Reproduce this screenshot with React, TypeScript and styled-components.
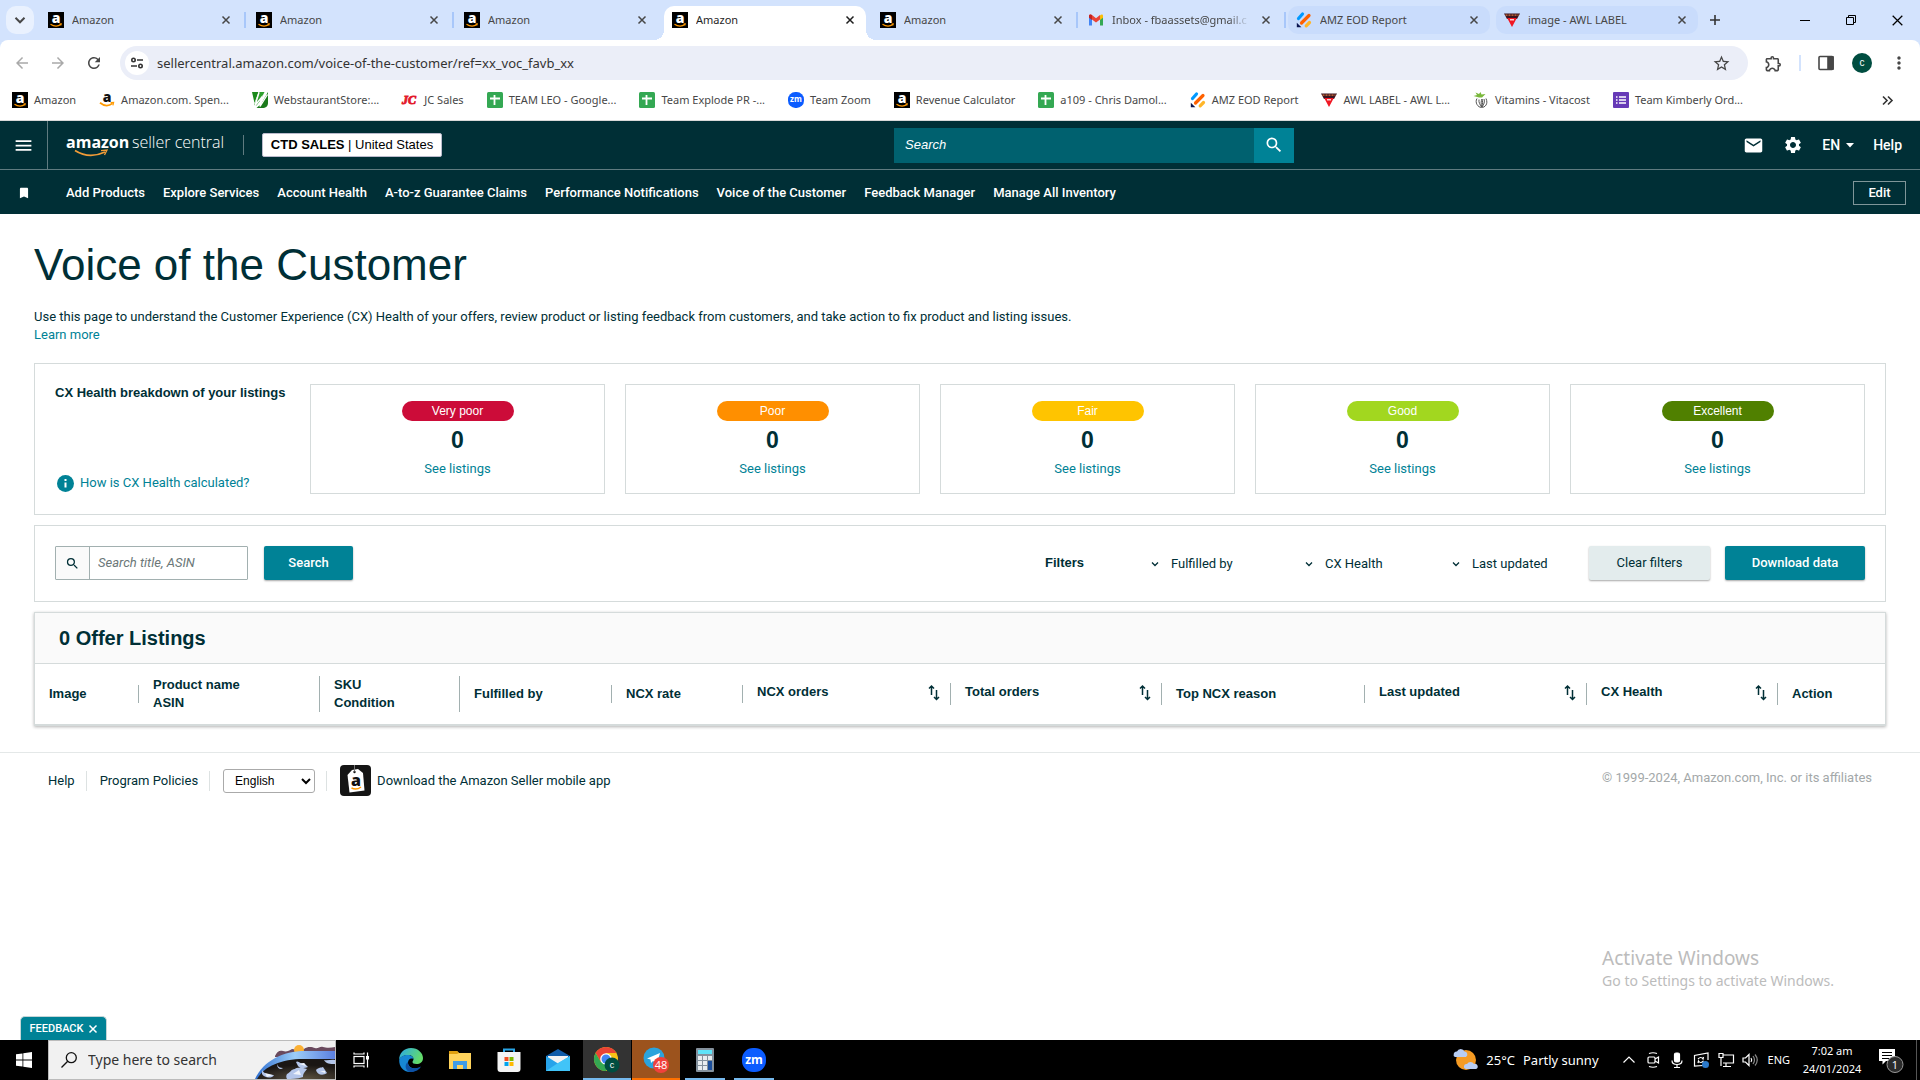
import React from 'react';
import styled, { createGlobalStyle, css } from 'styled-components';
import {
  MdArrowBack,
  MdArrowForward,
  MdBookmark,
  MdMail,
  MdMenu,
  MdMoreVert,
  MdOutlineExtension,
  MdRefresh,
  MdSearch,
  MdSettings,
  MdStarBorder,
} from 'react-icons/md';

const ARIAL = '"Liberation Sans", Arial, sans-serif';
const EMBER = 'Roboto, "Liberation Sans", sans-serif';
const SEGOE = '"Noto Sans", "Open Sans", sans-serif';

const TEAL = '#008296';
const INK = '#002f36';
const LINE = '#d5dbdb';

const GlobalStyle = createGlobalStyle`
  *, *::before, *::after { box-sizing: border-box; }
  body { margin: 0; background: #fff; }
  button, input, select { font: inherit; color: inherit; margin: 0; }
  button { padding: 0; border: 0; background: none; cursor: pointer; }
  a { color: inherit; text-decoration: none; }
  svg { display: block; flex: none; overflow: visible; }
`;

const Screen = styled.div`
  display: flex;
  flex-direction: column;
  min-height: 100vh;
  font-family: ${EMBER};
  color: ${INK};
`;

/* ---------- Browser ---------- */

const TabStrip = styled.div`
  display: flex;
  align-items: flex-end;
  height: 40px;
  padding-left: 6px;
  background: #d3e3fd;
  font: 11px/16px ${SEGOE};
  color: #474747;
`;

const TabSearch = styled.button`
  display: grid;
  place-items: center;
  width: 28px;
  height: 28px;
  margin: 0 6px 6px 0;
  border-radius: 10px;
  background: #e9f1fe;
`;

const TabSlot = styled.div<{ $state?: string; $rule?: boolean }>`
  position: relative;
  display: flex;
  align-items: center;
  flex: 0 1 208px;
  min-width: 0;
  height: 34px;
  padding: 0 6px 6px 0;

  ${p => p.$rule && css`
    &::after {
      content: '';
      position: absolute;
      right: 2px;
      top: 6px;
      width: 2px;
      height: 16px;
      background: #a8c7fa;
    }
  `}
  ${p => p.$state === 'active' && css`
    padding-bottom: 0;
    color: #1f1f1f;
  `}
`;

const TabBody = styled.div<{ $state?: string }>`
  display: flex;
  align-items: center;
  flex: 1;
  min-width: 0;
  height: 28px;
  padding: 0 8px;
  border-radius: 10px;
  ${p => p.$state === 'group' && css`background: #c9dcfc;`}
  ${p => p.$state === 'active' && css`
    height: 34px;
    padding-bottom: 6px;
    border-radius: 10px 10px 0 0;
    background: #fff;
    &::before, &::after {
      content: '';
      position: absolute;
      bottom: 0;
      width: 10px;
      height: 10px;
    }
    &::before {
      left: -10px;
      background: radial-gradient(circle at 0 0, transparent 10px, #fff 10px);
    }
    &::after {
      right: -4px;
      background: radial-gradient(circle at 100% 0, transparent 10px, #fff 10px);
    }
  `}
`;

const TabLabel = styled.button<{ $fade?: boolean }>`
  flex: 1;
  min-width: 0;
  margin-left: 8px;
  overflow: hidden;
  white-space: nowrap;
  text-align: left;
  ${p => p.$fade && css`mask-image: linear-gradient(90deg, #000 80%, transparent 94%);`}
`;

const IconButton = styled.button`
  display: grid;
  place-items: center;
  flex: none;
`;

const TabClose = styled(IconButton)`
  width: 16px;
  height: 16px;
`;

const NewTab = styled(IconButton)`
  width: 22px;
  height: 28px;
  margin: 0 auto 6px 0;
`;

const WindowButton = styled(IconButton)`
  width: 46px;
  height: 40px;
  color: #000;
`;

const Toolbar = styled.div`
  display: flex;
  align-items: center;
  height: 40px;
  padding: 6px 11px 0 8px;
  background: #d3e3fd;
  position: relative;
  isolation: isolate;
  color: #474747;
  &::before {
    content: '';
    position: absolute;
    inset: 0;
    z-index: -1;
    border-radius: 8px 8px 0 0;
    background: #fff;
  }
`;

const NavButton = styled(IconButton)<{ $off?: boolean }>`
  width: 28px;
  height: 28px;
  margin-right: 8px;
  color: ${p => (p.$off ? '#a9a9a9' : '#474747')};
`;

const Omnibox = styled.div`
  display: flex;
  align-items: center;
  flex: 1;
  height: 34px;
  margin-left: 4px;
  padding: 0 17px 0 5px;
  border-radius: 17px;
  background: #ebeef8;
`;

const SiteInfo = styled(IconButton)`
  width: 24px;
  height: 24px;
  border-radius: 50%;
  background: #fff;
`;

const UrlInput = styled.input`
  flex: 1;
  min-width: 0;
  padding: 0 8px;
  border: 0;
  outline: 0;
  background: none;
  font: 13px/20px ${SEGOE};
  color: #333;
`;

const ToolbarEnd = styled.div`
  display: flex;
  align-items: center;
  margin-left: 16px;
`;

const ToolbarRule = styled.span`
  width: 2px;
  height: 16px;
  margin: 0 17px 0 16px;
  background: #d3e3fd;
`;

const Avatar = styled.button`
  width: 20px;
  height: 20px;
  margin: 0 17px 0 18px;
  border-radius: 50%;
  background: #004d40;
  font: 10px/20px ${ARIAL};
  color: #fff;
`;

const Bookmarks = styled.nav`
  display: flex;
  align-items: center;
  gap: 23px;
  height: 41px;
  padding: 0 27px 0 12px;
  border-bottom: 1px solid #d9d9d9;
  background: #fff;
  font: 11px/16px ${SEGOE};
  color: #474747;
`;

const Bookmark = styled.a`
  display: flex;
  align-items: center;
  gap: 6px;
  white-space: nowrap;
`;

const MoreBookmarks = styled(IconButton)`
  margin-left: auto;
`;

/* ---------- Seller Central header ---------- */

const HeaderTop = styled.header`
  display: grid;
  grid-template-columns: minmax(450px, 894fr) 400px minmax(200px, 626fr);
  align-items: center;
  height: 49px;
  border-bottom: 1px solid #5f7b80;
  background: ${INK};
  color: #fff;
`;

const HeaderLeft = styled.div`
  display: flex;
  align-items: center;
  height: 48px;
`;

const MenuButton = styled(IconButton)`
  width: 48px;
  height: 48px;
  border-right: 1px solid #5f7b80;
`;

const Brand = styled.a`
  display: grid;
  width: 160px;
  height: 24px;
  margin-left: 18px;
`;

const BrandRule = styled.span`
  width: 1px;
  height: 20px;
  margin: 0 18px 0 17px;
  background: #5f7b80;
`;

const Account = styled.button`
  width: 180px;
  height: 24px;
  border: 1px solid #bbc;
  border-radius: 2px;
  background: #fff;
  font: 13px/22px ${ARIAL};
  color: #000;
  white-space: nowrap;
`;

const HeaderSearch = styled.form`
  display: flex;
  height: 35px;
`;

const HeaderInput = styled.input`
  flex: 1;
  min-width: 0;
  padding: 0 11px;
  border: 0;
  outline: 0;
  background: #00616f;
  font: italic 13px/20px ${ARIAL};
  color: #fff;
  &::placeholder { color: #fff; opacity: 1; }
`;

const HeaderGo = styled(IconButton)`
  width: 40px;
  background: ${TEAL};
`;

const HeaderRight = styled.div`
  display: flex;
  align-items: center;
  justify-content: flex-end;
  gap: 19px;
  padding-right: 18px;
  font: 500 14px/20px ${EMBER};
`;

const Lang = styled.button`
  display: flex;
  align-items: center;
  gap: 6px;
`;

const HeaderNav = styled.nav`
  display: flex;
  align-items: center;
  gap: 18px;
  height: 44px;
  padding: 1px 14px 0 17px;
  background: ${INK};
  font: 500 13px/20px ${EMBER};
  color: #fff;
  white-space: nowrap;
`;

const BookmarkButton = styled(IconButton)`
  width: 14px;
  margin-right: 17px;
`;

const EditButton = styled.button`
  width: 53px;
  height: 24px;
  margin-left: auto;
  border: 1px solid #7f9699;
  font-weight: 500;
`;

/* ---------- Page ---------- */

const Page = styled.main`
  position: relative;
  flex: 1;
  font: 13px/18px ${EMBER};
`;

const Content = styled.div`
  padding: 23px 34px 0;
`;

const Title = styled.h1`
  margin: 0;
  font: 400 44px/56px ${ARIAL};
`;

const Intro = styled.p`
  margin: 15px 0 19px;
`;

const TextLink = styled.a`
  color: ${TEAL};
`;

const Panel = styled.section`
  display: flex;
  margin-bottom: 10px;
  padding: 20px;
  border: 1px solid ${LINE};
`;

const Breakdown = styled.div`
  display: flex;
  flex-direction: column;
  justify-content: space-between;
  flex: 0 0 255px;
`;

const PanelTitle = styled.h2`
  margin: 0;
  font: 700 13px/18px ${ARIAL};
  white-space: nowrap;
`;

const HealthHelp = styled.a`
  display: flex;
  align-items: center;
  gap: 6px;
  padding-left: 2px;
  margin-bottom: 2px;
  color: ${TEAL};
`;

const Cards = styled.div`
  display: grid;
  grid-template-columns: repeat(5, minmax(0, 1fr));
  gap: 20px;
  flex: 1;
`;

const Card = styled.div`
  display: flex;
  flex-direction: column;
  align-items: center;
  height: 110px;
  padding-top: 16px;
  border: 1px solid ${LINE};
`;

const Badge = styled.span<{ $color: string }>`
  width: 112px;
  border-radius: 10px;
  background: ${p => p.$color};
  font: 12px/20px ${ARIAL};
  color: #fff;
  text-align: center;
`;

const Count = styled.strong`
  margin: 5px 0 6px;
  font: 700 23px/28px ${ARIAL};
`;

const FilterPanel = styled(Panel)`
  align-items: center;
  padding-bottom: 21px;
`;

const SearchField = styled.label`
  display: flex;
  width: 193px;
  height: 34px;
  margin-right: 16px;
  border: 1px solid #a2b0b0;
  border-radius: 1px;
`;

const SearchGlyph = styled.span`
  display: grid;
  place-items: center;
  width: 34px;
  border-right: 1px solid #a2b0b0;
  background: #fafafa;
`;

const SearchInput = styled.input`
  flex: 1;
  min-width: 0;
  padding: 0 8px;
  border: 0;
  outline: 0;
  font: italic 13px/18px ${EMBER};
  &::placeholder { color: #6b7778; opacity: 1; }
`;

const Button = styled.button<{ $quiet?: boolean; $width: number }>`
  width: ${p => p.$width}px;
  height: 34px;
  border-radius: 2px;
  background: ${p => (p.$quiet ? '#e3eced' : TEAL)};
  box-shadow: 0 1px 2px rgba(0, 0, 0, 0.35);
  font-weight: ${p => (p.$quiet ? 400 : 500)};
  color: ${p => (p.$quiet ? INK : '#fff')};
`;

const Filters = styled.div`
  display: flex;
  align-items: center;
  margin-left: auto;
`;

const Menus = styled.div`
  display: flex;
  margin-left: 67px;
  padding-top: 2px;
`;

const Filter = styled.button<{ $width: number }>`
  display: flex;
  align-items: center;
  gap: 12px;
  width: ${p => p.$width}px;
`;

const FilterActions = styled.div`
  display: flex;
  gap: 15px;
`;

const Listings = styled.section`
  border: 1px solid ${LINE};
  border-bottom-width: 2px;
  box-shadow: 0 1px 3px rgba(0, 0, 0, 0.3);
`;

const ListingsTitle = styled.h2`
  margin: 0;
  padding: 12px 24px;
  border-bottom: 1px solid ${LINE};
  background: #fafafa;
  font: 700 20px/26px ${ARIAL};
`;

const Table = styled.table`
  width: 100%;
  table-layout: fixed;
  border-collapse: collapse;
`;

const Col = styled.col<{ $share: number }>`
  width: ${p => p.$share}%;
`;

const HeadCell = styled.th`
  height: 60px;
  padding: 0;
  font: 700 13px/18px ${ARIAL};
  text-align: left;
  vertical-align: middle;
  &:last-child > * { border-right: 0; }
`;

const HeadLabel = styled.div`
  padding-left: 14px;
  border-right: 1px solid #a2b0b0;
`;

const SortLabel = styled.button`
  display: flex;
  justify-content: space-between;
  width: 100%;
  height: 22px;
  padding: 0 10px 0 14px;
  border-right: 1px solid #a2b0b0;
  font-weight: 700;
`;

const Footer = styled.footer`
  display: flex;
  align-items: center;
  margin-top: 26px;
  padding: 12px 48px;
  border-top: 1px solid #e4e8e8;
`;

const FooterRule = styled.span`
  width: 1px;
  height: 20px;
  margin: 0 13px 0 11px;
  background: #dde2e2;
`;

const LangSelect = styled.select`
  width: 92px;
  height: 24px;
  padding: 0 7px;
  border: 1px solid #aaa;
  border-radius: 3px;
  background: #fff;
  font: 12px/20px ${ARIAL};
  color: #000;
`;

const AppLink = styled.a`
  display: flex;
  align-items: center;
  gap: 6px;
`;

const Copyright = styled.span`
  margin-left: auto;
  padding-bottom: 6px;
  color: #a3a8a9;
`;

const Feedback = styled.button`
  position: absolute;
  left: 20px;
  bottom: 0;
  display: flex;
  align-items: center;
  justify-content: center;
  gap: 6px;
  width: 87px;
  height: 24px;
  border: 1px solid #c5d5d7;
  border-bottom: 0;
  border-radius: 5px 5px 0 0;
  background: ${TEAL};
  font: 500 11px/16px ${EMBER};
  color: #fff;
`;

const Watermark = styled.div`
  position: absolute;
  right: 86px;
  bottom: 49px;
  font: 14px/20px ${SEGOE};
  color: #bcbcbc;
`;

const WatermarkTitle = styled.div`
  font-size: 19px;
  line-height: 26px;
`;

/* ---------- Taskbar ---------- */

const Taskbar = styled.div`
  display: flex;
  height: 40px;
  background: #000;
  font: 14px/20px ${SEGOE};
  color: #fff;
`;

const StartButton = styled(IconButton)`
  width: 48px;
`;

const TaskSearch = styled.label`
  display: flex;
  align-items: center;
  width: 288px;
  padding-left: 12px;
  overflow: hidden;
  border: 1px solid #bbb;
  background: #f1f1f1;
  color: #000;
`;

const TaskInput = styled.input`
  flex: 1;
  min-width: 0;
  padding: 0 0 0 11px;
  border: 0;
  outline: 0;
  background: none;
  &::placeholder { color: #333; opacity: 1; }
`;

const Apps = styled.div`
  display: flex;
  gap: 1px;
`;

const AppButton = styled.button<{ $bg?: string; $bar?: string; $full?: boolean }>`
  display: grid;
  place-items: center;
  width: 48px;
  background:
    linear-gradient(${p => p.$bar ?? 'transparent'} 0 0) bottom / ${p => (p.$full ? '48px' : '40px')} 2px no-repeat
    ${p => p.$bg ?? 'transparent'};
  &:first-child { width: 50px; }
`;

const Tray = styled.div`
  display: flex;
  align-items: center;
  margin-left: auto;
  padding-right: 3px;
  font-size: 13px;
`;

const Weather = styled.button`
  display: flex;
  align-items: center;
  gap: 8px;
  margin-right: 22px;
`;

const TrayIcons = styled.div`
  display: flex;
  align-items: center;
  gap: 8px;
`;

const TrayLang = styled.button`
  margin: 0 6px 0 10px;
  font-size: 11px;
`;

const Clock = styled.time`
  width: 72px;
  font-size: 11px;
  line-height: 18px;
  text-align: center;
  white-space: nowrap;
`;

const Notices = styled(IconButton)`
  margin: 0 12px 0 10px;
`;

const TrayEdge = styled.span`
  width: 1px;
  height: 40px;
  background: #555;
`;

/* ---------- Icons ---------- */

const Cross = ({ size = 8, w = 1.5 }: { size?: number; w?: number }) => (
  <svg width={size} height={size} viewBox="0 0 8 8" stroke="currentColor" strokeWidth={w}>
    <path d="M.5.5l7 7M7.5.5l-7 7" />
  </svg>
);

const AmazonIcon = () => (
  <svg width="16" height="16" viewBox="0 0 16 16">
    <rect width="16" height="16" fill="#000" />
    <text x="8" y="11" textAnchor="middle" fontFamily="Open Sans, sans-serif" fontWeight="800" fontSize="14" fill="#fff">a</text>
    <path d="M2.5 12.2Q8 15.8 13 12.4" fill="none" stroke="#f90" strokeWidth="1.3" />
    <path d="M11.5 11.9l2-.4-.5 2" fill="none" stroke="#f90" strokeWidth=".8" />
  </svg>
);

const AmazonLight = () => (
  <svg width="16" height="16" viewBox="0 0 16 16">
    <text x="8" y="9.5" textAnchor="middle" fontFamily="Open Sans, sans-serif" fontWeight="800" fontSize="14" fill="#111">a</text>
    <path d="M1 10.8Q7.5 16 13.5 11.4" fill="none" stroke="#f90" strokeWidth="1.8" />
    <path d="M11.6 10.7l3-.3-.7 3" fill="none" stroke="#f90" strokeWidth="1.2" />
  </svg>
);

const GmailIcon = () => (
  <svg width="16" height="16" viewBox="0 0 16 16">
    <path d="M1 4v9.5h3V7z" fill="#4285f4" />
    <path d="M15 4v9.5h-3V7z" fill="#34a853" />
    <path d="M12 3.6V8l3-2.3V4c0-1.6-1.7-2-3-.4z" fill="#fbbc04" />
    <path d="M1 4c0-1.6 1.7-2 3-.9l4 3.1 4-3.1V7.500l-4 3-4-3z" fill="#ea4335" />
    <path d="M1 4c0-1.6 1.7-2 3-.9V8L1 5.700z" fill="#c5221f" />
  </svg>
);

const JotformIcon = () => (
  <svg width="16" height="16" viewBox="0 0 16 16" strokeLinecap="round" strokeWidth="3.2">
    <path d="M2.5 6.500L6.500 2" stroke="#0099ff" />
    <path d="M5.500 11L13 3.500" stroke="#ff6100" />
    <path d="M10.200 13.800L13.500 10.500" stroke="#ffb629" />
    <path d="M.8 10.800v4.500h4.600z" fill="#0a1551" />
  </svg>
);

const AwlIcon = () => (
  <svg width="16" height="16" viewBox="0 0 16 16">
    <path d="M0 1.500h16L13 7H3z" fill="#3a1320" />
    <path d="M1.500 3.200h13" stroke="#d9793a" strokeWidth="1.300" strokeDasharray="2 1" />
    <path d="M3.200 6h9.600L8 15z" fill="#f01824" />
    <path d="M6 7.800h4" stroke="#fff" strokeWidth="1.200" />
  </svg>
);

const WebstaurantIcon = () => (
  <svg width="16" height="16" viewBox="0 0 16 16">
    <path d="M0 0h6.500L2.500 11z" fill="#1b8a1b" />
    <path d="M7.500 0h5L8 9l-3.500 4.500L2 13z" fill="#2fa02f" />
    <path d="M16 0v11c0 3-2 5-6 5H4.500l4.500-4z" fill="#1b7a1b" />
    <path d="M7 .5L3 13.500 9.500 5.500 8 14.500l7.500-12" fill="none" stroke="#fff" strokeWidth="1.400" />
  </svg>
);

const JcIcon = () => (
  <svg width="16" height="16" viewBox="0 0 16 16">
    <text x="0" y="12" fontFamily="Liberation Serif, serif" fontStyle="italic" fontWeight="700" fontSize="12" fill="#e3192b" stroke="#e3192b" strokeWidth=".9">JC</text>
  </svg>
);

const SheetIcon = () => (
  <svg width="16" height="16" viewBox="0 0 16 16">
    <rect width="16" height="16" rx="1.500" fill="#34a853" />
    <path d="M3 6.500h10M7.500 3v10" stroke="#fff" strokeWidth="1.800" />
  </svg>
);

const ZoomIcon = ({ size = 16 }: { size?: number }) => (
  <svg width={size} height={size} viewBox="0 0 24 24">
    <rect width="24" height="24" rx="11" fill="#0b5cff" />
    <text x="12" y="15.500" textAnchor="middle" fontFamily="Open Sans, sans-serif" fontWeight="700" fontSize="12" fill="#fff">zm</text>
  </svg>
);

const VitacostIcon = () => (
  <svg width="16" height="16" viewBox="0 0 16 16" fill="none">
    <path d="M6 5.500L.5 4 4 3 2.500.5 6 2l1.500-2 1 2.500 4-.500L9 5.500z" fill="#7ab83c" />
    <path d="M4 6.500c-2.500 4 1 9 4.500 9s7-3.500 4.500-9M6 7.500c-.5 3 1 5 2.500 7.500C8 11 8 9 9 7c1 2 .5 5 0 8 2-3 3-5 2-8" stroke="#555" />
  </svg>
);

const FormsIcon = () => (
  <svg width="16" height="16" viewBox="0 0 16 16">
    <rect width="16" height="16" rx="1" fill="#673ab7" />
    <path d="M6 5h7M6 8h7M6 11h7M3 5h1.500M3 8h1.500M3 11h1.500" stroke="#fff" strokeWidth="1.500" />
  </svg>
);

const TuneIcon = () => (
  <svg width="14" height="14" viewBox="0 0 14 14" fill="none" stroke="#333" strokeWidth="1.600">
    <circle cx="3.500" cy="4" r="1.700" />
    <path d="M7 4h6M1 10h6" />
    <circle cx="10.500" cy="10" r="1.700" />
  </svg>
);

const Chevron = ({ size = 8 }: { size?: number }) => (
  <svg width={size} height={size} viewBox="0 0 8 8" fill="none" stroke="currentColor" strokeWidth="1.300">
    <path d="M1 2.500l3 3 3-3" />
  </svg>
);

const BrandLogo = () => (
  <svg width="160" height="24" viewBox="0 0 160 24">
    <text x="0" y="15" fontFamily="Open Sans, sans-serif" fontWeight="700" fontSize="16" fill="#fff">amazon</text>
    <text x="66" y="15" fontFamily="Open Sans, sans-serif" fontWeight="300" fontSize="16" fill="#fff">seller central</text>
    <path d="M9 17.500Q23 26.500 39 19" fill="none" stroke="#f19c38" strokeWidth="1.700" />
    <path d="M35 17.700l6-.7-2.500 5" fill="none" stroke="#f19c38" strokeWidth="1.300" />
  </svg>
);

const SortIcon = () => (
  <svg width="12" height="18" viewBox="0 0 12 18" fill="none" stroke={INK} strokeWidth="1.500">
    <path d="M3.500 12V3M1 5.500L3.500 3 6 5.500M8.500 7v9.500M6 14l2.500 2.500L11 14" />
  </svg>
);

const InfoIcon = () => (
  <svg width="17" height="17" viewBox="0 0 17 17">
    <circle cx="8.500" cy="8.500" r="8.500" fill={TEAL} />
    <path d="M8.500 7.500v5M8.500 4v2" stroke="#fff" strokeWidth="2" />
  </svg>
);

const SellerAppIcon = () => (
  <svg width="31" height="31" viewBox="0 0 31 31">
    <rect width="31" height="31" rx="4" fill="#151515" />
    <path d="M7.500 10l4.500-5 6-1 5 4 1.500 17.500L9.500 27.500z" fill="#fff" />
    <circle cx="14.500" cy="7" r="1.200" fill="#151515" />
    <path d="M14.500 6.500V0" stroke="#777" />
    <text x="16" y="21" textAnchor="middle" fontFamily="Open Sans, sans-serif" fontWeight="800" fontSize="16" fill="#111">a</text>
    <path d="M11.500 23q5 2.500 9.500-1" fill="none" stroke="#f90" strokeWidth="1.500" />
  </svg>
);

const WindowsLogo = () => (
  <svg width="16" height="16" viewBox="0 0 16 16" fill="#fff">
    <path d="M0 2.300L6.500 1.400v6.200H0zM7.300 1.300L16 0v7.600H7.300zM0 8.400h6.500v6.200L0 13.700zM7.300 8.400H16V16l-8.700-1.300z" />
  </svg>
);

const Lens = () => (
  <svg width="16" height="16" viewBox="0 0 16 16" fill="none" stroke="#111" strokeWidth="1.300">
    <circle cx="10.300" cy="5.700" r="5" />
    <path d="M6.700 9.300L.5 15.500" />
  </svg>
);

const SearchArt = () => (
  <svg width="80" height="38" viewBox="0 0 80 38">
    <defs>
      <linearGradient id="sea" x1="0" y1="0" x2="1" y2="0">
        <stop offset="0" stopColor="#2f6fd0" />
        <stop offset=".5" stopColor="#9ccdf8" />
        <stop offset="1" stopColor="#5b7fe0" />
      </linearGradient>
      <radialGradient id="rock" cx=".6" cy="1" r=".7">
        <stop offset="0" stopColor="#5c5240" />
        <stop offset="1" stopColor="#1a1614" />
      </radialGradient>
    </defs>
    <path d="M20 15c2-5 5-6 8-5s6 0 9-2l6 1 6-1c4-3 8-2 11-1s5-2 8-1 8 1 12 0v10H20z" fill="#6a4a5e" />
    <circle cx="44" cy="9" r="5" fill="#fbb034" />
    <path d="M0 38C8 20 28 10 50 10h30v28z" fill="url(#sea)" />
    <path d="M2 38c7-13 25-20 46-20h32v20z" fill="url(#rock)" />
    <path d="M7 29c2 4 7 5 12 5-2 4-10 3-12-1zM22 23c1 3 3 4 6 4-2 2-6 1-6-4zM32 33c3-1 4-5 8-5 2-2 8-1 12 0-2 3-4 4-4 8-6 2-12 2-16 2-1-2-1-3 0-5zM41 21c2-2 3 2 8 1l4 4c-4 2-9 1-10-1zM61 29c3-3 5-2 7-3l4 6c-4 3-10 2-11-3zM69 19c4 1 7-1 11 0v4c-5 0-9 0-11-4z" fill="#b4c6ea" />
    <path d="M10 32l8 2-6 2zM38 33l6-4 2 5zM44 23l5-1 2 3zM65 30h5v2z" fill="#eef3fb" />
  </svg>
);

const TaskViewIcon = () => (
  <svg width="17" height="16" viewBox="0 0 17 16" fill="none" stroke="#fff" strokeWidth="1.200">
    <rect x="1" y="4.500" width="10" height="7" />
    <path d="M1 .5V2h10V.5M1 15.500V14h10v1.500M14.500.5v15" />
    <path d="M14.500 4v3.500" stroke="#fff" strokeWidth="3" />
  </svg>
);

const EdgeIcon = () => (
  <svg width="24" height="24" viewBox="0 0 24 24">
    <defs>
      <linearGradient id="edge-a" x1="0" y1="0" x2="1" y2=".4">
        <stop offset="0" stopColor="#2aa8e8" />
        <stop offset="1" stopColor="#63dc6a" />
      </linearGradient>
    </defs>
    <path d="M12 0c7 0 12 5 12 10 0 4-3 6-6.500 6-3 0-4-1-4-2s1-1.500 1-3c0-2-2-4-5-4C4 7 .5 10 .2 12 0 5 5 0 12 0z" fill="url(#edge-a)" />
    <path d="M.2 12C.8 9 4.500 6.800 9 7c3 0 5.500 2 5.500 4-3-1.500-5.500.5-5.500 3.500 0 4 4 7 10 5.500-2 2.500-4.500 4-8 4C4 24 0 18 .2 12z" fill="#1787d4" />
    <path d="M9 14c-.5 4.500 4 8 10.500 5.500 1-.3 2.500-1.500 2.500-1-1.500 3-5.500 5.500-10 5.500-6 0-7-8-3-10z" fill="#0d51a5" />
  </svg>
);

const FolderIcon = () => (
  <svg width="22" height="18" viewBox="0 0 22 18">
    <path d="M0 0h8l2 2h12v16H0z" fill="#ffd35c" />
    <path d="M0 0h8l2 2-2 1H0z" fill="#e0a010" />
    <path d="M4 18v-8h14v8h-4v-4H8v4z" fill="#3f9be6" />
  </svg>
);

const StoreIcon = () => (
  <svg width="24" height="24" viewBox="0 0 24 24">
    <path d="M7 5V1.500h10V5" fill="none" stroke="#29a5e6" strokeWidth="2" />
    <path d="M.5 4h23v17a3 3 0 0 1-3 3h-17a3 3 0 0 1-3-3z" fill="#f4f4f4" />
    <path d="M7.500 9h4v4h-4z" fill="#f25022" />
    <path d="M12.500 9h4v4h-4z" fill="#7fba00" />
    <path d="M7.500 14h4v4h-4z" fill="#00a4ef" />
    <path d="M12.500 14h4v4h-4z" fill="#ffb900" />
  </svg>
);

const MailAppIcon = () => (
  <svg width="24" height="22" viewBox="0 0 24 22">
    <path d="M0 7l12-7 12 7v3H0z" fill="#0f5ba8" />
    <path d="M2 7h20v8H2z" fill="#f2f2f2" />
    <path d="M0 7l12 7.500L24 7v15H0z" fill="#27a3ea" />
    <path d="M0 22l12-8L24 7v15z" fill="#41c4f8" />
  </svg>
);

const ChromeIcon = () => (
  <svg width="26" height="26" viewBox="0 0 26 26">
    <circle cx="12" cy="12" r="12" fill="#fbc116" />
    <path d="M1.600 6A12 12 0 0 1 22.400 6H12L6.800 15z" fill="#ea4335" />
    <path d="M1.600 6A12 12 0 0 0 12 24l5.200-9H6.800z" fill="#34a853" />
    <circle cx="12" cy="12" r="5.800" fill="#fff" />
    <circle cx="12" cy="12" r="4.500" fill="#4285f4" />
    <circle cx="18" cy="18" r="7.500" fill="#004d40" />
    <text x="18" y="21" textAnchor="middle" fontFamily="Liberation Sans, sans-serif" fontSize="9" fill="#fff">c</text>
  </svg>
);

const TelegramIcon = () => (
  <svg width="26" height="26" viewBox="0 0 26 26">
    <circle cx="11" cy="11" r="10.500" fill="#2ba3dc" />
    <path d="M4 11.500L17 6l-3 11-4-3-2 2-.5-3.500z" fill="#fff" />
    <circle cx="18" cy="18" r="8" fill="#f0413b" />
    <text x="18" y="22" textAnchor="middle" fontFamily="Open Sans, sans-serif" fontSize="11" fill="#fff">48</text>
  </svg>
);

const CalcIcon = () => (
  <svg width="18" height="24" viewBox="0 0 18 24">
    <rect width="18" height="24" rx="1" fill="#84919d" />
    <path d="M2 2h14v4H2z" fill="#5fe3f8" />
    <path d="M2 8h4v4H2zM7 8h4v4H7zM12 8h4v4h-4zM2 13h4v4H2zM7 13h4v4H7zM2 18h4v4H2zM7 18h4v4H7z" fill="#e9edf0" />
    <path d="M12 13h4v9h-4z" fill="#1c4f9c" />
  </svg>
);

const WeatherIcon = () => (
  <svg width="24" height="24" viewBox="0 0 24 24">
    <circle cx="12" cy="12" r="10" fill="#f59b23" />
    <path d="M1 9a3 3 0 0 1 2-5.500 4 4 0 0 1 7.500 0A3 3 0 0 1 12 9z" fill="#b8cdf3" />
    <path d="M12 21a2.500 2.500 0 0 1 1-5 4 4 0 0 1 7 0 2.600 2.600 0 0 1 2 5z" fill="#b8cdf3" />
  </svg>
);

const line = { fill: 'none', stroke: '#fff', strokeWidth: 1.2 };

const UpIcon = () => (
  <svg width="16" height="16" viewBox="0 0 16 16" {...line}><path d="M2.500 10.500L8 5l5.500 5.500" /></svg>
);
const MeetIcon = () => (
  <svg width="16" height="16" viewBox="0 0 16 16" {...line}>
    <rect x="3" y="5" width="7" height="6" rx="1" />
    <path d="M10 7l3.500-2v6L10 9M4 1.500q4-1.500 8 0M4 14.500q4 1.500 8 0" />
  </svg>
);
const MicIcon = () => (
  <svg width="16" height="16" viewBox="0 0 16 16" {...line}>
    <rect x="5.500" y="1" width="5" height="9" rx="1.500" fill="#fff" />
    <path d="M3 8.500q0 4 5 4t5-4M8 12.500V15M5 15.500h6" />
  </svg>
);
const SyncIcon = () => (
  <svg width="17" height="16" viewBox="0 0 17 16" {...line}>
    <path d="M10 13.500L1.500 14V3.500L15 1v7M5 7q3-3 5 0l.5-2M10.500 9q-3 3-5 0L5 11" />
    <circle cx="12.500" cy="12.500" r="3.500" fill="#2b79c9" stroke="none" />
  </svg>
);
const NetIcon = () => (
  <svg width="16" height="16" viewBox="0 0 16 16" {...line}>
    <path d="M5 3h10.500v8H5M8 11v3M5 14.500h8M1 1.500h4v4H1zM3 5.500V14" />
  </svg>
);
const VolumeIcon = () => (
  <svg width="16" height="16" viewBox="0 0 16 16" {...line}>
    <path d="M1 6h2.500L7 2.500v11L3.500 10H1zM9 6q1.500 2 0 4" />
    <path d="M11 4q3 4 0 8M13 2.500q4.500 5.500 0 11" stroke="#888" />
  </svg>
);
const NoticeIcon = () => (
  <svg width="26" height="26" viewBox="0 0 26 26">
    <path d="M1 2h16v12H8l-3.500 3.500V14H1z" fill="#fff" />
    <path d="M4 5.500h10M4 8.500h10M4 11.500h7" stroke="#000" strokeWidth="1.200" />
    <circle cx="17" cy="17.500" r="8" fill="#2b2b2b" stroke="#999" />
    <text x="17" y="21.500" textAnchor="middle" fontFamily="Open Sans, sans-serif" fontSize="11" fill="#fff">1</text>
  </svg>
);

/* ---------- Data ---------- */

const tabs: { label: string; icon: () => React.JSX.Element; state?: string; rule?: boolean; fade?: boolean }[] = [
  { label: 'Amazon', icon: AmazonIcon, rule: true },
  { label: 'Amazon', icon: AmazonIcon, rule: true },
  { label: 'Amazon', icon: AmazonIcon },
  { label: 'Amazon', icon: AmazonIcon, state: 'active' },
  { label: 'Amazon', icon: AmazonIcon, rule: true },
  { label: 'Inbox - fbaassets@gmail.c', icon: GmailIcon, rule: true, fade: true },
  { label: 'AMZ EOD Report', icon: JotformIcon, state: 'group' },
  { label: 'image - AWL LABEL', icon: AwlIcon, state: 'group' },
];

const bookmarks: [string, () => React.JSX.Element][] = [
  ['Amazon', AmazonIcon],
  ['Amazon.com. Spen...', AmazonLight],
  ['WebstaurantStore:...', WebstaurantIcon],
  ['JC Sales', JcIcon],
  ['TEAM LEO - Google...', SheetIcon],
  ['Team Explode PR -...', SheetIcon],
  ['Team Zoom', ZoomIcon],
  ['Revenue Calculator', AmazonIcon],
  ['a109 - Chris Damol...', SheetIcon],
  ['AMZ EOD Report', JotformIcon],
  ['AWL LABEL - AWL L...', AwlIcon],
  ['Vitamins - Vitacost', VitacostIcon],
  ['Team Kimberly Ord...', FormsIcon],
];

const navItems = [
  'Add Products',
  'Explore Services',
  'Account Health',
  'A-to-z Guarantee Claims',
  'Performance Notifications',
  'Voice of the Customer',
  'Feedback Manager',
  'Manage All Inventory',
];

const ratings = [
  ['Very poor', '#cc0c39'],
  ['Poor', '#ff8f00'],
  ['Fair', '#ffc400'],
  ['Good', '#a2d71f'],
  ['Excellent', '#508000'],
];

const columns: { label: string[]; width: number; sort?: boolean }[] = [
  { label: ['Image'], width: 104 },
  { label: ['Product name', 'ASIN'], width: 181 },
  { label: ['SKU', 'Condition'], width: 140 },
  { label: ['Fulfilled by'], width: 152 },
  { label: ['NCX rate'], width: 131 },
  { label: ['NCX orders'], width: 208, sort: true },
  { label: ['Total orders'], width: 211, sort: true },
  { label: ['Top NCX reason'], width: 203 },
  { label: ['Last updated'], width: 222, sort: true },
  { label: ['CX Health'], width: 191, sort: true },
  { label: ['Action'], width: 107 },
];

const totalWidth = columns.reduce((sum, c) => sum + c.width, 0);

/* ---------- App ---------- */

const Browser = () => (
  <>
    <TabStrip>
      <TabSearch aria-label="Search tabs"><Chevron size={12} /></TabSearch>
      {tabs.map((tab, i) => (
        <TabSlot key={i} $state={tab.state} $rule={tab.rule}>
          <TabBody $state={tab.state}>
            <tab.icon />
            <TabLabel $fade={tab.fade}>{tab.label}</TabLabel>
            <TabClose aria-label="Close tab"><Cross /></TabClose>
          </TabBody>
        </TabSlot>
      ))}
      <NewTab aria-label="New tab">
        <svg width="12" height="12" viewBox="0 0 12 12" stroke="#333" strokeWidth="1.600"><path d="M6 1v10M1 6h10" /></svg>
      </NewTab>
      <WindowButton aria-label="Minimize">
        <svg width="10" height="10" viewBox="0 0 10 10" stroke="currentColor"><path d="M0 5.500h10" /></svg>
      </WindowButton>
      <WindowButton aria-label="Restore">
        <svg width="10" height="10" viewBox="0 0 10 10" fill="none" stroke="currentColor"><path d="M.5 2.500h7v7h-7zM2.500 2.500v-2h7v7h-2" /></svg>
      </WindowButton>
      <WindowButton aria-label="Close"><Cross size={11} w={0.9} /></WindowButton>
    </TabStrip>
    <Toolbar>
      <NavButton $off aria-label="Back"><MdArrowBack size={18} /></NavButton>
      <NavButton $off aria-label="Forward"><MdArrowForward size={18} /></NavButton>
      <NavButton aria-label="Reload"><MdRefresh size={18} /></NavButton>
      <Omnibox>
        <SiteInfo aria-label="Site information"><TuneIcon /></SiteInfo>
        <UrlInput
          aria-label="Address"
          defaultValue="sellercentral.amazon.com/voice-of-the-customer/ref=xx_voc_favb_xx"
        />
        <IconButton aria-label="Bookmark this page"><MdStarBorder size={19} /></IconButton>
      </Omnibox>
      <ToolbarEnd>
        <IconButton aria-label="Extensions"><MdOutlineExtension size={19} /></IconButton>
        <ToolbarRule />
        <IconButton aria-label="Side panel">
          <svg width="16" height="16" viewBox="0 0 16 16" fill="none" stroke="currentColor" strokeWidth="1.600">
            <rect x="1" y="1.500" width="14" height="13" rx="1" />
            <path d="M10 2h5v12h-5z" fill="currentColor" />
          </svg>
        </IconButton>
        <Avatar aria-label="Profile">c</Avatar>
        <IconButton aria-label="Menu"><MdMoreVert size={20} /></IconButton>
      </ToolbarEnd>
    </Toolbar>
    <Bookmarks aria-label="Bookmarks">
      {bookmarks.map(([label, Icon]) => (
        <Bookmark key={label} href="#"><Icon />{label}</Bookmark>
      ))}
      <MoreBookmarks aria-label="More bookmarks">
        <svg width="11" height="9" viewBox="0 0 11 9" fill="none" stroke="#333" strokeWidth="1.600"><path d="M1 .5l4 4-4 4M6 .5l4 4-4 4" /></svg>
      </MoreBookmarks>
    </Bookmarks>
  </>
);

const SellerHeader = () => (
  <>
    <HeaderTop>
      <HeaderLeft>
        <MenuButton aria-label="Menu"><MdMenu size={21} /></MenuButton>
        <Brand href="#" aria-label="Amazon seller central"><BrandLogo /></Brand>
        <BrandRule />
        <Account><b>CTD SALES</b> | United States</Account>
      </HeaderLeft>
      <HeaderSearch onSubmit={e => e.preventDefault()}>
        <HeaderInput aria-label="Search" placeholder="Search" />
        <HeaderGo aria-label="Go"><MdSearch size={20} /></HeaderGo>
      </HeaderSearch>
      <HeaderRight>
        <IconButton aria-label="Messages"><MdMail size={21} /></IconButton>
        <IconButton aria-label="Settings"><MdSettings size={20} /></IconButton>
        <Lang>
          EN
          <svg width="8" height="5" viewBox="0 0 8 5"><path d="M0 0h8L4 4.500z" fill="#fff" /></svg>
        </Lang>
        <a href="#">Help</a>
      </HeaderRight>
    </HeaderTop>
    <HeaderNav>
      <BookmarkButton aria-label="Favorites"><MdBookmark size={14} /></BookmarkButton>
      {navItems.map(item => <a key={item} href="#">{item}</a>)}
      <EditButton>Edit</EditButton>
    </HeaderNav>
  </>
);

const FilterMenus = () => (
  <Menus>
    <Filter $width={154}><Chevron />Fulfilled by</Filter>
    <Filter $width={147}><Chevron />CX Health</Filter>
    <Filter $width={137}><Chevron />Last updated</Filter>
  </Menus>
);

const OfferTable = () => (
  <Listings>
    <ListingsTitle>0 Offer Listings</ListingsTitle>
    <Table>
      <colgroup>
        {columns.map(c => <Col key={c.label[0]} $share={(c.width / totalWidth) * 100} />)}
      </colgroup>
      <thead>
        <tr>
          {columns.map(c => (
            <HeadCell key={c.label[0]} scope="col">
              {c.sort
                ? <SortLabel>{c.label[0]}<SortIcon /></SortLabel>
                : <HeadLabel>{c.label.map(l => <div key={l}>{l}</div>)}</HeadLabel>}
            </HeadCell>
          ))}
        </tr>
      </thead>
    </Table>
  </Listings>
);

const WindowsTaskbar = () => (
  <Taskbar>
    <StartButton aria-label="Start"><WindowsLogo /></StartButton>
    <TaskSearch>
      <Lens />
      <TaskInput aria-label="Type here to search" placeholder="Type here to search" />
      <SearchArt />
    </TaskSearch>
    <Apps>
      <AppButton aria-label="Task view"><TaskViewIcon /></AppButton>
      <AppButton aria-label="Edge"><EdgeIcon /></AppButton>
      <AppButton aria-label="File Explorer"><FolderIcon /></AppButton>
      <AppButton aria-label="Store"><StoreIcon /></AppButton>
      <AppButton aria-label="Mail"><MailAppIcon /></AppButton>
      <AppButton aria-label="Chrome" $bg="#333" $bar="#76b9ed" $full><ChromeIcon /></AppButton>
      <AppButton aria-label="Telegram" $bg="#9c531d" $bar="#ff7100" $full><TelegramIcon /></AppButton>
      <AppButton aria-label="Calculator" $bar="#76b9ed"><CalcIcon /></AppButton>
      <AppButton aria-label="Zoom" $bar="#76b9ed"><ZoomIcon size={24} /></AppButton>
    </Apps>
    <Tray>
      <Weather><WeatherIcon /><span>25°C</span><span>Partly sunny</span></Weather>
      <TrayIcons>
        <UpIcon /><MeetIcon /><MicIcon /><SyncIcon /><NetIcon /><VolumeIcon />
      </TrayIcons>
      <TrayLang>ENG</TrayLang>
      <Clock>7:02 am<br />24/01/2024</Clock>
      <Notices aria-label="Notifications"><NoticeIcon /></Notices>
      <TrayEdge />
    </Tray>
  </Taskbar>
);

export default function App() {
  return (
    <Screen>
      <GlobalStyle />
      <Browser />
      <SellerHeader />
      <Page>
        <Content>
          <Title>Voice of the Customer</Title>
          <Intro>
            Use this page to understand the Customer Experience (CX) Health of your offers, review product or listing
            feedback from customers, and take action to fix product and listing issues.
            <br />
            <TextLink href="#">Learn more</TextLink>
          </Intro>
          <Panel>
            <Breakdown>
              <PanelTitle>CX Health breakdown of your listings</PanelTitle>
              <HealthHelp href="#"><InfoIcon />How is CX Health calculated?</HealthHelp>
            </Breakdown>
            <Cards>
              {ratings.map(([label, color]) => (
                <Card key={label}>
                  <Badge $color={color}>{label}</Badge>
                  <Count>0</Count>
                  <TextLink href="#">See listings</TextLink>
                </Card>
              ))}
            </Cards>
          </Panel>
          <FilterPanel>
            <SearchField>
              <SearchGlyph><MdSearch size={15} /></SearchGlyph>
              <SearchInput aria-label="Search title, ASIN" placeholder="Search title, ASIN" />
            </SearchField>
            <Button $width={89}>Search</Button>
            <Filters>
              <PanelTitle as="span">Filters</PanelTitle>
              <FilterMenus />
            </Filters>
            <FilterActions>
              <Button $quiet $width={121}>Clear filters</Button>
              <Button $width={140}>Download data</Button>
            </FilterActions>
          </FilterPanel>
          <OfferTable />
        </Content>
        <Footer>
          <a href="#">Help</a>
          <FooterRule />
          <a href="#">Program Policies</a>
          <FooterRule />
          <LangSelect aria-label="Language" defaultValue="English"><option>English</option></LangSelect>
          <FooterRule />
          <AppLink href="#"><SellerAppIcon />Download the Amazon Seller mobile app</AppLink>
          <Copyright>© 1999-2024, Amazon.com, Inc. or its affiliates</Copyright>
        </Footer>
        <Watermark>
          <WatermarkTitle>Activate Windows</WatermarkTitle>
          Go to Settings to activate Windows.
        </Watermark>
        <Feedback>FEEDBACK <Cross /></Feedback>
      </Page>
      <WindowsTaskbar />
    </Screen>
  );
}
